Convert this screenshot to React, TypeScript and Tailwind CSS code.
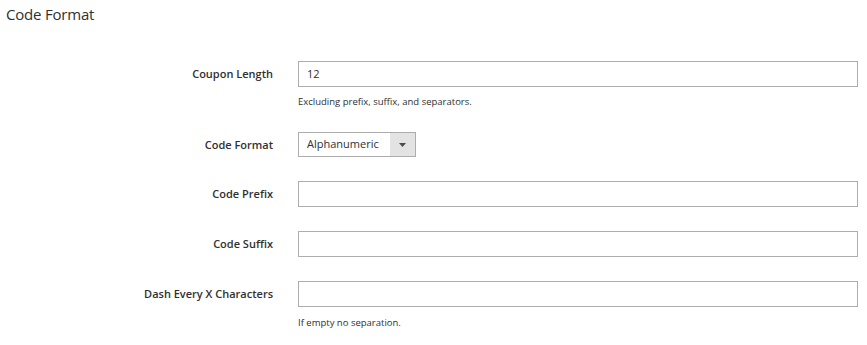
import React from "react";

const font = { fontFamily: '"Open Sans", "Noto Sans", sans-serif' };

function Label({ children }: { children: React.ReactNode }) {
  return (
    <div className="w-[273px] shrink-0 flex items-center justify-end text-[11px] font-semibold text-[#303030] leading-[14px]">
      {children}
    </div>
  );
}

function TextInput({ value = "" }: { value?: string }) {
  return (
    <div className="w-[560px] h-[26px] border border-[#adadad] bg-white flex items-center pl-[8px] text-[11px] text-[#303030]">
      {value}
    </div>
  );
}

export default function App() {
  return (
    <div className="w-[867px] h-[345px] bg-white overflow-hidden text-[#303030]" style={font}>
      <div className="pl-[6px] pt-[4px] text-[15px] leading-[20px] tracking-[-0.2px] text-[#303030]">Code Format</div>

      <div className="mt-[37px] flex gap-[25px]">
        <div className="flex h-[26px]">
          <Label>Coupon Length</Label>
        </div>
        <div className="flex flex-col">
          <TextInput value="12" />
          <div className="mt-[8px] text-[9.5px] leading-[13px]">Excluding prefix, suffix, and separators.</div>
        </div>
      </div>

      <div className="mt-[24px] flex gap-[25px]">
        <div className="flex h-[25px]">
          <Label>Code Format</Label>
        </div>
        <div className="w-[118px] h-[25px] border border-[#adadad] flex">
          <div className="flex-1 flex items-center pl-[8px] text-[11px] text-[#303030]">Alphanumeric</div>
          <div className="w-[25px] bg-[#e3e3e3] flex items-center justify-center">
            <svg width="7" height="4" viewBox="0 0 7 4">
              <path d="M0 0 L7 0 L3.5 4 Z" fill="#514943" />
            </svg>
          </div>
        </div>
      </div>

      <div className="mt-[24px] flex gap-[25px]">
        <div className="flex h-[26px]">
          <Label>Code Prefix</Label>
        </div>
        <TextInput />
      </div>

      <div className="mt-[24px] flex gap-[25px]">
        <div className="flex h-[26px]">
          <Label>Code Suffix</Label>
        </div>
        <TextInput />
      </div>

      <div className="mt-[24px] flex gap-[25px]">
        <div className="flex h-[26px]">
          <Label>Dash Every X Characters</Label>
        </div>
        <div className="flex flex-col">
          <TextInput />
          <div className="mt-[9px] text-[9.5px] leading-[13px]">If empty no separation.</div>
        </div>
      </div>
    </div>
  );
}
